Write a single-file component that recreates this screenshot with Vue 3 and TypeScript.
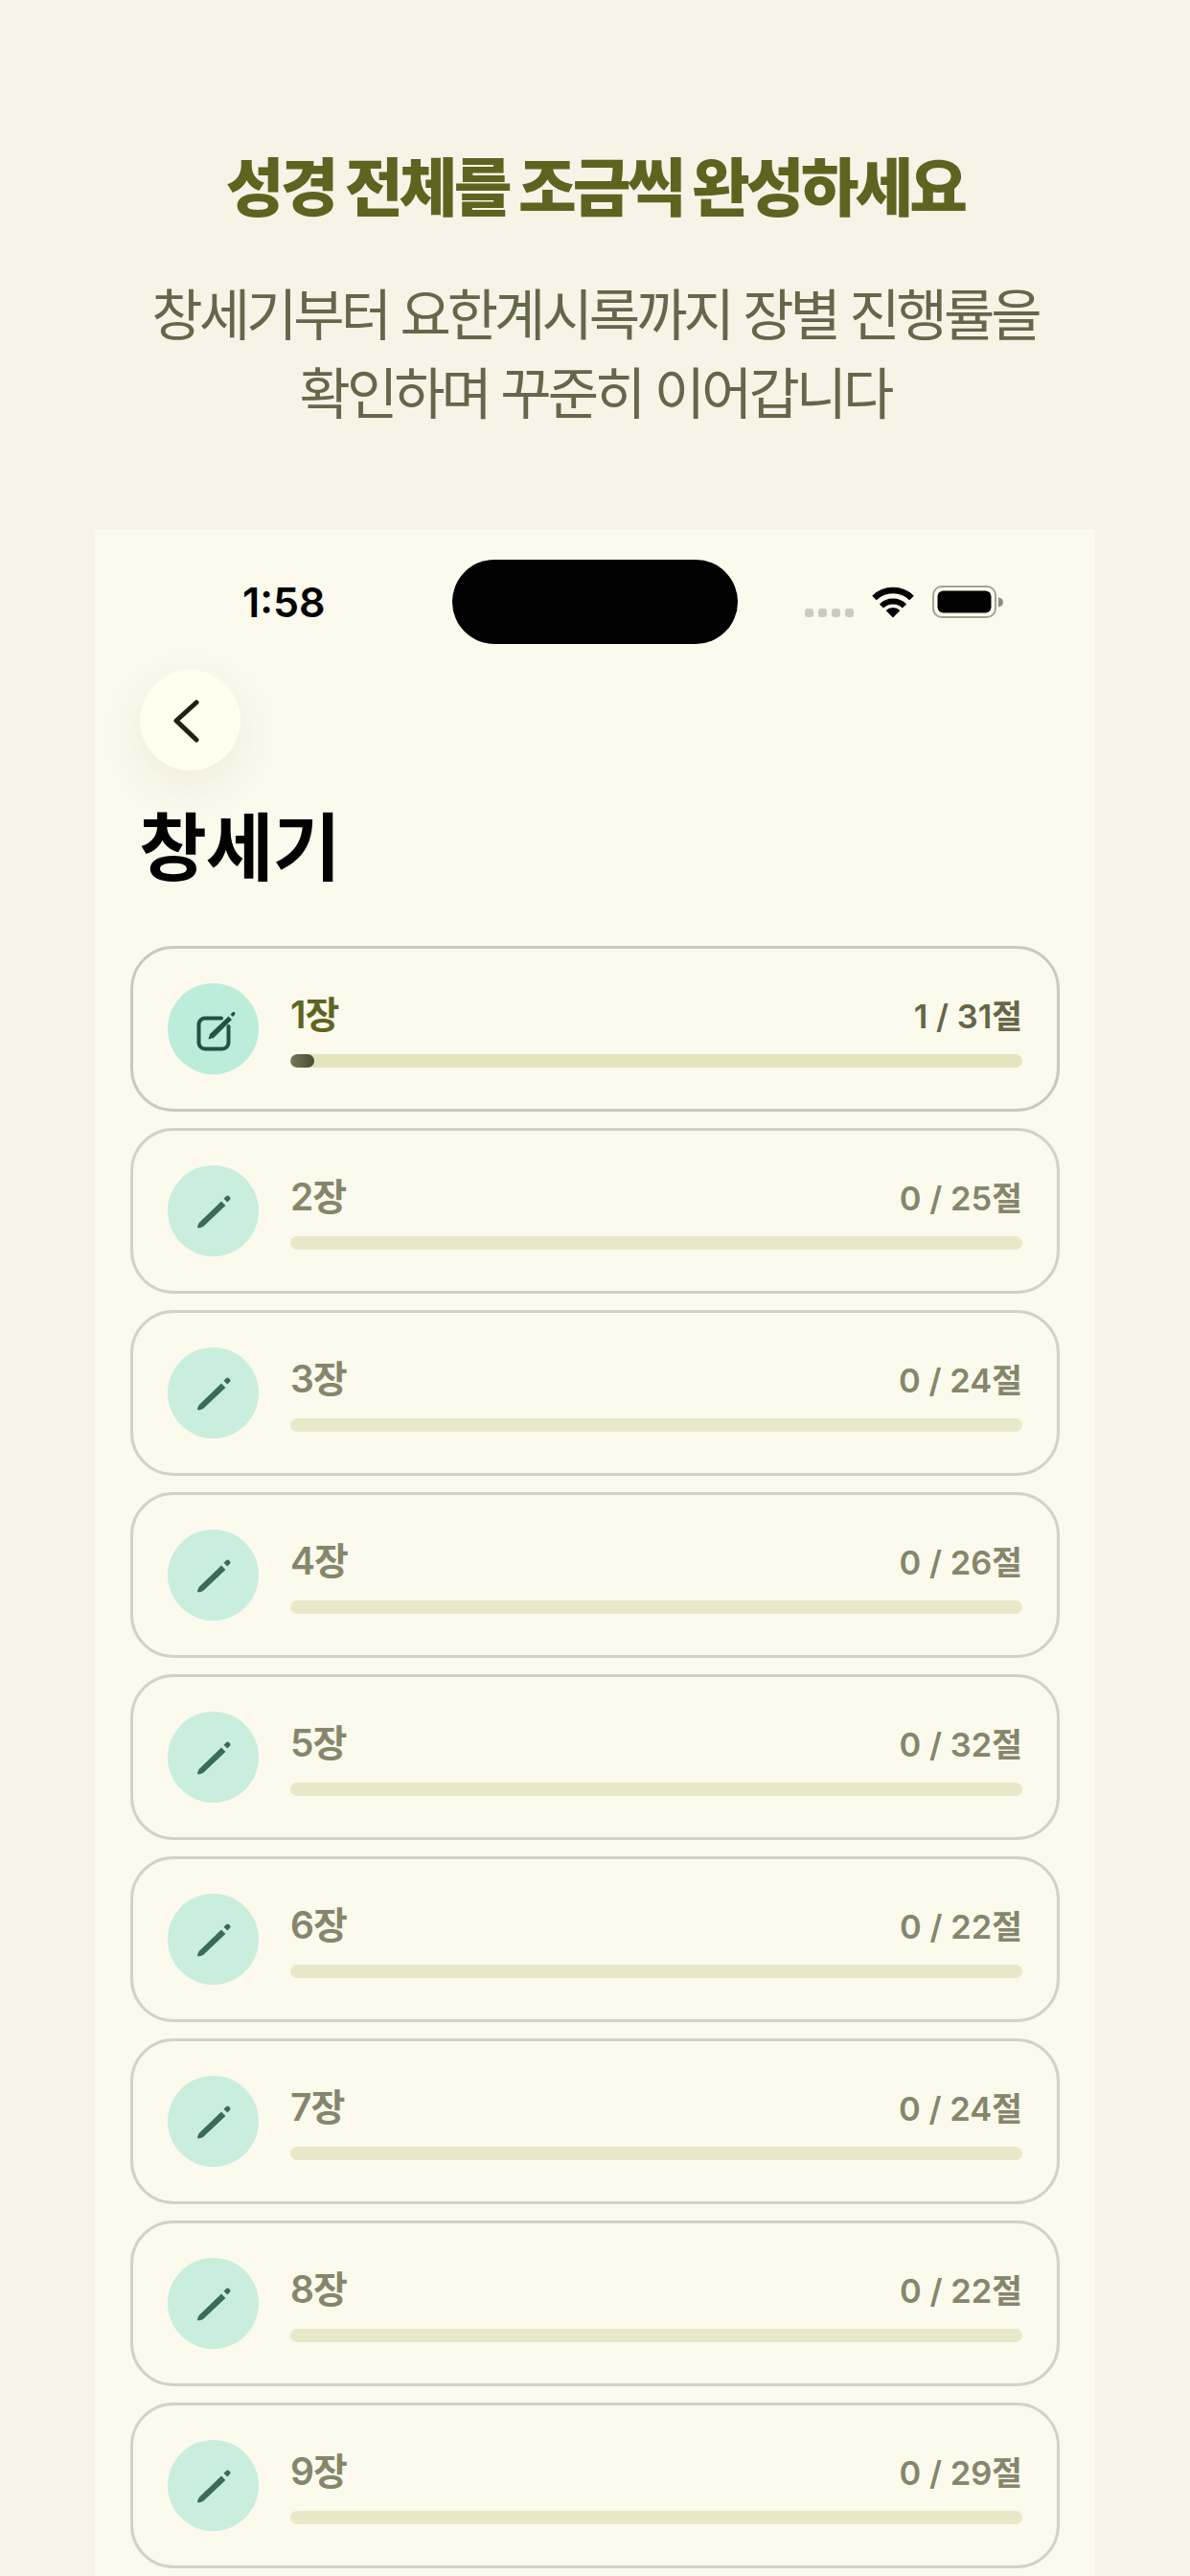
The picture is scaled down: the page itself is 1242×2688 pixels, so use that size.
<script setup lang="ts">
interface Chapter {
  name: string
  progress: string
  active: boolean
}

const chapters: Chapter[] = [
  { name: '1장', progress: '1 / 31절', active: true },
  { name: '2장', progress: '0 / 25절', active: false },
  { name: '3장', progress: '0 / 24절', active: false },
  { name: '4장', progress: '0 / 26절', active: false },
  { name: '5장', progress: '0 / 32절', active: false },
  { name: '6장', progress: '0 / 22절', active: false },
  { name: '7장', progress: '0 / 24절', active: false },
  { name: '8장', progress: '0 / 22절', active: false },
  { name: '9장', progress: '0 / 29절', active: false },
]
</script>

<template>
  <div class="page">
    <header class="intro">
      <h1 class="headline">성경 전체를 조금씩 완성하세요</h1>
      <p class="sub">창세기부터 요한계시록까지 장별 진행률을<br />확인하며 꾸준히 이어갑니다</p>
    </header>

    <main class="phone">
      <div class="status">
        <span class="time">1:58</span>
        <span class="island"></span>
        <div class="indicators">
          <span class="dots"><i></i><i></i><i></i><i></i></span>
          <svg class="wifi" viewBox="0 0 46 34" width="46" height="34" fill="none">
            <path d="M3.5 13A28 28 0 0 1 42.5 13" stroke="#000" stroke-width="6.5" />
            <path d="M11 21.5A17 17 0 0 1 35 21.5" stroke="#000" stroke-width="6" />
            <path d="M23 33.5L15.6 26A10.6 10.6 0 0 1 30.4 26Z" fill="#000" />
          </svg>
          <svg class="battery" viewBox="0 0 74 34" width="74" height="34" fill="none">
            <rect x="1" y="1" width="65" height="32" rx="9" stroke="#a3a394" stroke-width="2" />
            <rect x="5.5" y="5.5" width="56" height="23" rx="6" fill="#000" />
            <path d="M69 12.5a5 5 0 0 1 0 10z" fill="#8f8f82" />
          </svg>
        </div>
      </div>

      <button class="back" type="button" aria-label="뒤로">
        <svg viewBox="0 0 32 48" width="32" height="48" fill="none">
          <path d="M26 5L5 24L26 44" stroke="#232010" stroke-width="5" stroke-linecap="round" stroke-linejoin="round" />
        </svg>
      </button>

      <h2 class="title">창세기</h2>

      <ul class="list">
        <li v-for="c in chapters" :key="c.name" class="card" :class="{ active: c.active }">
          <span class="badge">
            <svg v-if="c.active" viewBox="0 0 46 46" width="46" height="46" fill="none">
              <path d="M31 11.5H14a6.5 6.5 0 0 0-6.5 6.5V37a6.5 6.5 0 0 0 6.5 6.5H32a6.5 6.5 0 0 0 6.5-6.5V20" stroke="#235347" stroke-width="4" stroke-linecap="round" />
              <path d="M17.5 33.5L19 28L38.5 9.5L42 13L23 32Z" fill="#235347" />
              <path d="M40.5 7.5L42.5 5.5a1.6 1.6 0 0 1 2.4 0a1.6 1.6 0 0 1 0 2.400L43 10Z" fill="#235347" />
            </svg>
            <svg v-else viewBox="0 0 36 36" width="36" height="36" fill="none">
              <path d="M1 35.2C1.2 33 2 30.8 3.5 29.3L26 7.4L30.4 11.900L7.6 33.5C5.8 35 3.2 35.600 1 35.200Z" fill="#3a6b5a" />
              <path d="M28.5 4.700L31 2.200A2.200 2.200 0 0 1 34 2.200L34.800 3A2.200 2.200 0 0 1 34.800 6L32.300 8.500Z" fill="#3a6b5a" />
            </svg>
          </span>
          <div class="body">
            <div class="row">
              <span class="name">{{ c.name }}</span>
              <span class="count">{{ c.progress }}</span>
            </div>
            <div class="track">
              <div v-if="c.active" class="fill"></div>
            </div>
          </div>
        </li>
      </ul>
    </main>
  </div>
</template>

<style>
html,
body {
  margin: 0;
  background: #f7f3e7;
}
</style>

<style scoped>
.page {
  width: 1242px;
  height: 2688px;
  overflow: hidden;
  background: #f7f3e7;
  font-family: Inter, "Noto Sans CJK KR", sans-serif;
  display: flex;
  flex-direction: column;
  align-items: center;
}

.intro {
  flex: none;
  height: 552px;
  box-sizing: border-box;
  padding-top: 154px;
  text-align: center;
  width: 100%;
}

.headline {
  margin: 0;
  color: #5f631f;
  font-size: 66px;
  line-height: 84px;
  font-weight: 800;
  letter-spacing: -3.9px;
}

.sub {
  margin: 50px 0 0;
  color: #66664a;
  font-size: 58px;
  line-height: 82px;
  font-weight: 400;
  letter-spacing: -4px;
}

.phone {
  flex: none;
  width: 1044px;
  height: 2136px;
  background: #fcfaed;
  box-sizing: border-box;
  padding: 32px 37px 0;
}

.status {
  display: grid;
  grid-template-columns: 1fr 298px 1fr;
  align-items: center;
  height: 88px;
  margin: 0 -37px;
}

.time {
  padding-left: 154px;
  font-size: 43px;
  font-weight: 600;
  color: #000;
  line-height: 88px;
}

.island {
  height: 88px;
  border-radius: 44px;
  background: #000;
}

.indicators {
  display: flex;
  align-items: center;
  padding-left: 70px;
  height: 34px;
}

.dots {
  display: flex;
  gap: 5px;
  align-self: flex-end;
  margin-bottom: 1px;
}

.dots i {
  width: 9px;
  height: 9px;
  border-radius: 3px;
  background: #cdcbbd;
}

.wifi {
  margin-left: 18px;
}

.battery {
  margin-left: 18px;
}

.back {
  display: flex;
  align-items: center;
  justify-content: center;
  width: 105px;
  height: 105px;
  margin: 27px 0 0 10px;
  padding: 0 8px 0 0;
  border: 0;
  border-radius: 50%;
  background: #fffff0;
  box-shadow: 0 16px 48px rgba(90, 80, 40, 0.08);
}

.title {
  margin: 26px 0 0 9px;
  color: #000;
  font-size: 77px;
  line-height: 110px;
  font-weight: 700;
  letter-spacing: -1px;
}

.list {
  list-style: none;
  margin: 47px 0 0;
  padding: 0;
  display: flex;
  flex-direction: column;
  gap: 17px;
}

.card {
  display: flex;
  align-items: center;
  gap: 33px;
  height: 173px;
  box-sizing: border-box;
  padding: 0 36px;
  border: 3px solid #d4d2c4;
  border-radius: 45px;
}

.card.active {
  border-color: #cccabb;
}

.badge {
  flex: none;
  width: 95px;
  height: 95px;
  border-radius: 50%;
  background: #c9eedd;
  display: flex;
  align-items: center;
  justify-content: center;
}

.active .badge {
  background: #bcecda;
}

.body {
  flex: 1;
  min-width: 0;
}

.row {
  display: flex;
  justify-content: space-between;
  align-items: baseline;
  line-height: 50px;
  font-weight: 600;
}

.name {
  font-size: 39px;
  color: #85866c;
  letter-spacing: -1px;
}

.active .name {
  color: #60641f;
}

.count {
  font-size: 34.5px;
  color: #85866c;
}

.active .count {
  color: #666648;
}

.track {
  height: 14px;
  margin-top: 14px;
  border-radius: 7px;
  background: #e9e9c9;
  overflow: hidden;
}

.active .track {
  background: #e5e5bd;
}

.fill {
  width: 25px;
  height: 100%;
  border-radius: 7px;
  background: linear-gradient(90deg, #77775a, #4d4d33);
}
</style>
